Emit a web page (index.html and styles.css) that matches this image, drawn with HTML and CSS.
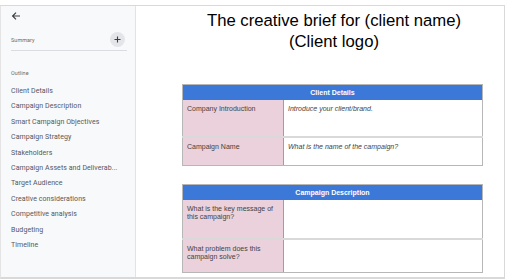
FILE: index.html
```html
<!DOCTYPE html>
<html lang="en">
<head>
  <meta charset="UTF-8">
  <title>Creative brief</title>
  <link rel="stylesheet" href="styles.css">
</head>
<body>

<div class="frame">
  <aside class="sidebar">
    <div class="back">
      <svg width="10" height="10" viewBox="0 0 10 10">
        <path d="M9 5H1.8M5 1.6L1.6 5L5 8.4" fill="none" stroke="#3c4043" stroke-width="1.2"/>
      </svg>
    </div>
    <div class="summary-row">
      <span class="side-label">Summary</span>
      <span class="add-btn">
        <svg width="7" height="7" viewBox="0 0 7 7">
          <path d="M3.5 0.5V6.5M0.5 3.5H6.5" stroke="#3c4043" stroke-width="1.1"/>
        </svg>
      </span>
    </div>
    <div class="side-divider"></div>
    <div class="side-label outline-label">Outline</div>
    <ul class="outline">
      <li>Client Details</li>
      <li>Campaign Description</li>
      <li>Smart Campaign Objectives</li>
      <li>Campaign Strategy</li>
      <li>Stakeholders</li>
      <li>Campaign Assets and Deliverab...</li>
      <li>Target Audience</li>
      <li>Creative considerations</li>
      <li>Competitive analysis</li>
      <li>Budgeting</li>
      <li>Timeline</li>
    </ul>
  </aside>

  <main class="doc">
    <div class="page">
      <div class="doc-title">The creative brief for (client name)<br>(Client logo)</div>

      <table class="brief brief-client">
        <colgroup><col class="col-label"><col></colgroup>
        <tr><th colspan="2">Client Details</th></tr>
        <tr class="row-a">
          <td class="label">Company Introduction</td>
          <td class="hint">Introduce your client/brand.</td>
        </tr>
        <tr class="row-b">
          <td class="label">Campaign Name</td>
          <td class="hint">What is the name of the campaign?</td>
        </tr>
      </table>

      <table class="brief brief-desc">
        <colgroup><col class="col-label"><col></colgroup>
        <tr><th colspan="2">Campaign Description</th></tr>
        <tr class="row-c">
          <td class="label">What is the key message of this campaign?</td>
          <td class="hint"></td>
        </tr>
        <tr class="row-d">
          <td class="label">What problem does this campaign solve?</td>
          <td class="hint"></td>
        </tr>
      </table>
    </div>
  </main>
</div>

</body>
</html>
```

FILE: styles.css
```css
html, body {
  margin: 0; padding: 0;
  background: #fff;
}
body { font-family: Roboto, 'Noto Sans', Arial, sans-serif; }

.frame {
  margin-top: 5px;
  width: 503px;
  height: 271px;
  border: 1px solid #d9d9d9;
  border-bottom-width: 2px;
  border-left-color: #e4e4e4;
  display: flex;
  overflow: hidden;
}

/* Боковая панель */
.sidebar {
  width: 135px;
  flex: none;
  background: #f8f9fa;
  border-right: 1px solid #e3e3e3;
  padding: 0 8px 0 10px;
  box-sizing: border-box;
}
.back {
  height: 10px;
  margin-top: 5px;
  display: flex;
}
.summary-row {
  margin-top: 11px;
  height: 15px;
  display: flex;
  align-items: center;
  justify-content: space-between;
}
.side-label {
  font-size: 5.4px;
  color: #666a6e;
  letter-spacing: 0.02em;
}
.add-btn {
  width: 15px;
  height: 15px;
  border-radius: 50%;
  background: #e3e5e8;
  display: flex;
  align-items: center;
  justify-content: center;
  margin-right: 2px;
}
.side-divider {
  margin-top: 3px;
  height: 1px;
  background: #dadce0;
}
.outline-label {
  margin-top: 18px;
  line-height: 8px;
}
.outline {
  list-style: none;
  margin: 7px 0 0 0;
  padding: 0;
}
.outline li {
  font-size: 7px;
  line-height: 15.4px;
  color: #55585c;
  white-space: nowrap;
  letter-spacing: 0.01em;
}

/* Документ */
.doc {
  flex: 1;
  background: #fff;
}
.page {
  width: 301px;
  margin-left: 46px;
}
.doc-title {
  font-family: 'Liberation Sans', Arial, sans-serif;
  font-size: 16.7px;
  line-height: 20.5px;
  text-align: center;
  color: #000;
  padding-top: 5px;
  margin-left: 3px;
}

.brief {
  width: 301px;
  border-collapse: collapse;
  font-family: 'Liberation Sans', Arial, sans-serif;
  font-size: 7px;
  line-height: 8px;
  table-layout: fixed;
}
.col-label { width: 101px; }
.brief-client { margin-top: 32px; }
.brief-desc { margin-top: 18px; }
.brief th {
  background: #3c78d8;
  color: #fff;
  font-weight: 700;
  height: 15px;
  padding: 0;
  border: 1px solid #b7b7b7;
  border-bottom: none;
}
.brief td {
  border: 1px solid #b7b7b7;
  border-top: 2px solid #d9d9d9;
  vertical-align: top;
  padding: 5px 4px 0 4px;
  color: #434343;
}
.brief td.label {
  background: #ead1dc;
  border-right-color: #9e9e9e;
}
.brief td.hint {
  font-style: italic;
  background: #fff;
}
.brief tr:nth-child(2) td { border-top: none; }
.row-a td { height: 31px; }
.row-b td { height: 22px; }
.row-c td { height: 33px; }
.row-d td { height: 27px; }
```
